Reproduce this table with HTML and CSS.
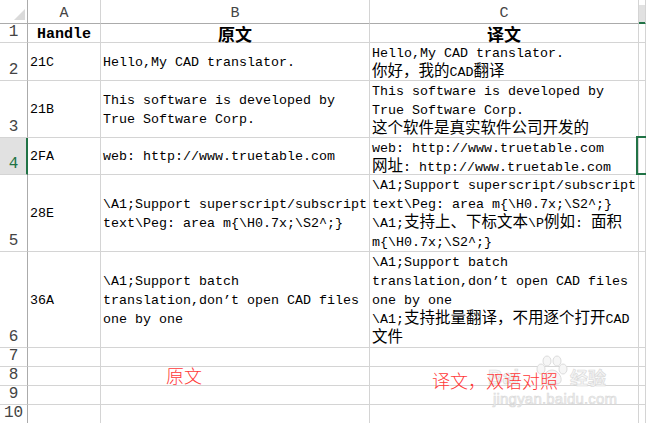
FILE: index.html
```html
<!DOCTYPE html>
<html lang="zh">
<head>
<meta charset="utf-8">
<title>Sheet</title>
<link rel="stylesheet" href="styles.css">
</head>
<body>
<div class="sheet">
  <div class="corner"><svg width="27" height="23" viewBox="0 0 27 23"><polygon points="14,20 25,20 25,9" fill="#dadada"/></svg></div>
  <div class="ch">A</div>
  <div class="ch">B</div>
  <div class="ch">C</div>
  <div class="ch chd"><span class="chd-in"></span></div>

  <div class="rh">1</div>
  <div class="c hd">Handle</div>
  <div class="c hd zhb">原文</div>
  <div class="c hd zhb">译文</div>
  <div class="c"></div>

  <div class="rh">2</div>
  <div class="c vm"><div class="ln">21C</div></div>
  <div class="c vm"><div class="ln">Hello,My CAD translator.</div></div>
  <div class="c tp"><div class="ln">Hello,My CAD translator.</div><div class="ln"><span class="zh">你好，我的</span>CAD<span class="zh">翻译</span></div></div>
  <div class="c"></div>

  <div class="rh">3</div>
  <div class="c vm"><div class="ln">21B</div></div>
  <div class="c vm"><div class="ln">This software is developed by</div><div class="ln">True Software Corp.</div></div>
  <div class="c tp"><div class="ln">This software is developed by</div><div class="ln">True Software Corp.</div><div class="ln"><span class="zh">这个软件是真实软件公司开发的</span></div></div>
  <div class="c"></div>

  <div class="rh sel">4</div>
  <div class="c vm"><div class="ln">2FA</div></div>
  <div class="c vm"><div class="ln">web: http://www.truetable.com</div></div>
  <div class="c tp"><div class="ln">web: http://www.truetable.com</div><div class="ln"><span class="zh">网址</span>: http://www.truetable.com</div></div>
  <div class="c csel"><span class="selbox"></span></div>

  <div class="rh">5</div>
  <div class="c vm"><div class="ln">28E</div></div>
  <div class="c vm"><div class="ln">\A1;Support superscript/subscript</div><div class="ln">text\Peg: area m{\H0.7x;\S2^;}</div></div>
  <div class="c tp"><div class="ln">\A1;Support superscript/subscript</div><div class="ln">text\Peg: area m{\H0.7x;\S2^;}</div><div class="ln">\A1;<span class="zh">支持上、下标文本</span>\P<span class="zh">例如</span>: <span class="zh">面积</span></div><div class="ln">m{\H0.7x;\S2^;}</div></div>
  <div class="c"></div>

  <div class="rh">6</div>
  <div class="c vm"><div class="ln">36A</div></div>
  <div class="c vm"><div class="ln">\A1;Support batch</div><div class="ln">translation,don’t open CAD files</div><div class="ln">one by one</div></div>
  <div class="c tp"><div class="ln">\A1;Support batch</div><div class="ln">translation,don’t open CAD files</div><div class="ln">one by one</div><div class="ln">\A1;<span class="zh">支持批量翻译，不用逐个打开</span>CAD</div><div class="ln"><span class="zh">文件</span></div></div>
  <div class="c"></div>

  <div class="rh">7</div><div class="c"></div><div class="c"></div><div class="c"></div><div class="c"></div>
  <div class="rh">8</div><div class="c"></div><div class="c"></div><div class="c"></div><div class="c"></div>
  <div class="rh">9</div><div class="c"></div><div class="c"></div><div class="c"></div><div class="c"></div>
  <div class="rh">10</div><div class="c"></div><div class="c"></div><div class="c"></div><div class="c"></div>

  <div class="wm">
    <span class="wm-bai">Bai</span>
    <svg class="wm-paw" width="36" height="32" viewBox="0 0 36 32">
      <g fill="#f6f6f6" stroke="#dcdcdc" stroke-width="1">
        <ellipse cx="7" cy="14" rx="4" ry="5"/>
        <ellipse cx="13" cy="6" rx="4" ry="5"/>
        <ellipse cx="23" cy="6" rx="4" ry="5"/>
        <ellipse cx="29" cy="14" rx="4" ry="5"/>
        <path d="M18 15 C12 15 8 22 9 26 C10 30 15 29 18 28 C21 29 26 30 27 26 C28 22 24 15 18 15 Z"/>
      </g>
    </svg>
    <span class="wm-jy">经验</span>
    <span class="wm-url">jingyan.baidu.com</span>
  </div>

  <div class="note note1">原文</div>
  <div class="note note2">译文，双语对照</div>
</div>
</body>
</html>
```
FILE: styles.css
```css
html, body {
  margin: 0;
  padding: 0;
  background: #fff;
  overflow: hidden;
}

.sheet {
  position: relative;
  width: 646px;
  height: 423px;
  overflow: hidden;
  display: grid;
  grid-template-columns: 28px 73px 269px 269px 1fr;
  grid-template-rows: 24px 19px 38px 57px 37px 77px 96px 19px 19px 19px 19px;
  font-family: "Liberation Mono", "Noto Sans CJK SC", monospace;
  color: #000;
}

.corner {
  border-right: 1px solid #ababab;
  border-bottom: 1px solid #ababab;
  box-sizing: border-box;
}
.corner svg { display: block; }

.ch {
  box-sizing: border-box;
  border-right: 1px solid #d4d4d4;
  border-bottom: 1px solid #ababab;
  display: flex;
  align-items: center;
  justify-content: center;
  padding-top: 5px;
  font: 15px/16px "Liberation Mono", monospace;
  color: #444;
}

.chd {
  padding-top: 5px;
  align-items: stretch;
  justify-content: stretch;
  border-bottom: 1px solid #217346;
}
.chd-in {
  flex: 1;
  background: #e1e1e1;
  border-bottom: 1px solid #217346;
}

.rh {
  box-sizing: border-box;
  border-right: 1px solid #ababab;
  border-bottom: 1px solid #d4d4d4;
  display: flex;
  align-items: flex-end;
  justify-content: center;
  padding-bottom: 1px;
  font: 16px/18px "Liberation Mono", monospace;
  color: #444;
}
.rh.sel {
  background: #e1e1e1;
  color: #217346;
  border-right: 2px solid #217346;
  padding-left: 1px;
}

.c {
  box-sizing: border-box;
  border-right: 1px solid #d4d4d4;
  border-bottom: 1px solid #d4d4d4;
  padding-left: 2px;
  font-size: 13.33px;
  line-height: 19px;
  white-space: nowrap;
  overflow: hidden;
}

.tp {
  padding-top: 1px;
}

.ln {
  height: 19px;
  line-height: 19px;
}

.vm {
  display: flex;
  flex-direction: column;
  justify-content: center;
  padding-top: 1px;
}

.zh {
  font-family: "Noto Sans CJK SC", sans-serif;
  font-size: 15.5px;
  line-height: 12px;
}

.hd {
  display: flex;
  align-items: center;
  justify-content: center;
  padding-left: 0;
  padding-top: 2px;
  font-weight: bold;
  font-size: 15px;
  line-height: 17px;
  overflow: visible;
}
.hd.zhb {
  font-family: "Noto Sans CJK SC", sans-serif;
  font-size: 17px;
  padding-top: 0;
}

.csel {
  position: relative;
  overflow: visible;
}
.selbox {
  position: absolute;
  left: -3px;
  top: -2px;
  bottom: -1px;
  right: -12px;
  border: 2px solid #217346;
}

.note {
  position: absolute;
  font-family: "Noto Sans CJK SC", sans-serif;
  font-weight: 300;
  font-size: 18px;
  line-height: 20px;
  color: #ff3a3a;
  white-space: nowrap;
}
.note1 { left: 166px; top: 365px; }
.note2 { left: 432px; top: 370px; }

.wm {
  position: absolute;
  left: 486px;
  top: 354px;
  width: 130px;
  height: 56px;
  color: #f4f4f4;
  -webkit-text-stroke: 0.6px #d8d8d8;
}
.wm-bai {
  position: absolute;
  left: 2px;
  top: 12px;
  font: bold 20px/22px "Liberation Sans", sans-serif;
}
.wm-paw {
  position: absolute;
  left: 48px;
  top: 1px;
}
.wm-jy {
  position: absolute;
  left: 84px;
  top: 13px;
  font: bold 18px/20px "Noto Sans CJK SC", sans-serif;
}
.wm-url {
  position: absolute;
  left: 7px;
  top: 37px;
  font: 15px/16px "Liberation Sans", sans-serif;
  letter-spacing: 0.2px;
}
```
